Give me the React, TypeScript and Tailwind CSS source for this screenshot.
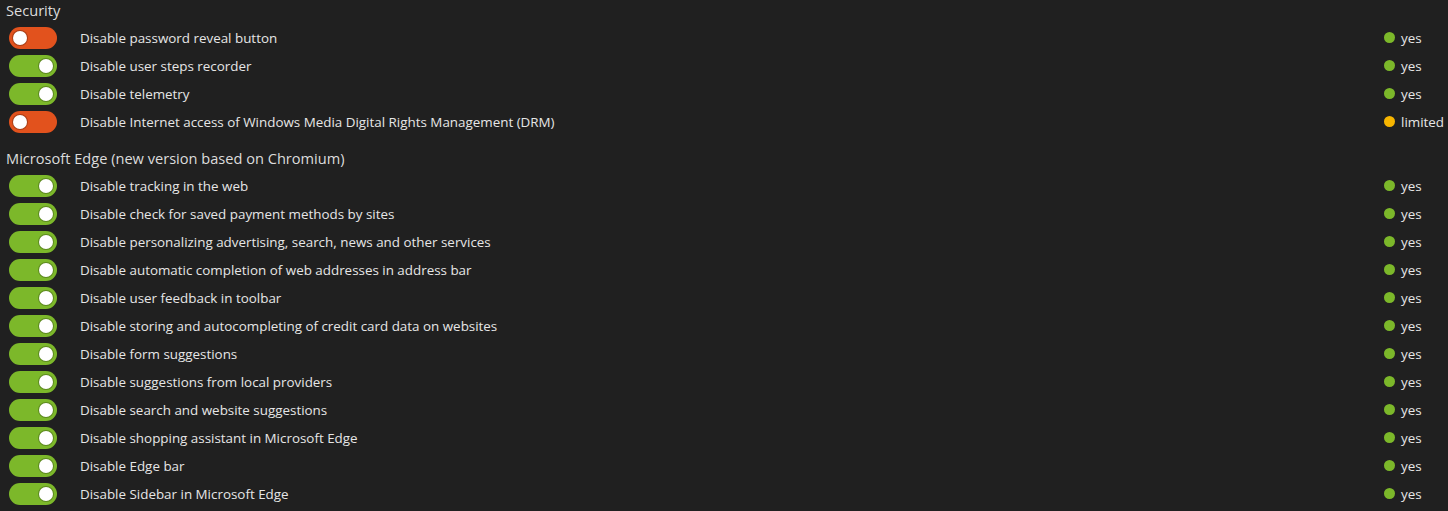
import React from "react";

type Item = { label: string; on: boolean; status: "yes" | "limited" };

const SECTIONS: { title: string; items: Item[] }[] = [
  {
    title: "Security",
    items: [
      { label: "Disable password reveal button", on: false, status: "yes" },
      { label: "Disable user steps recorder", on: true, status: "yes" },
      { label: "Disable telemetry", on: true, status: "yes" },
      {
        label: "Disable Internet access of Windows Media Digital Rights Management (DRM)",
        on: false,
        status: "limited",
      },
    ],
  },
  {
    title: "Microsoft Edge (new version based on Chromium)",
    items: [
      { label: "Disable tracking in the web", on: true, status: "yes" },
      { label: "Disable check for saved payment methods by sites", on: true, status: "yes" },
      { label: "Disable personalizing advertising, search, news and other services", on: true, status: "yes" },
      { label: "Disable automatic completion of web addresses in address bar", on: true, status: "yes" },
      { label: "Disable user feedback in toolbar", on: true, status: "yes" },
      { label: "Disable storing and autocompleting of credit card data on websites", on: true, status: "yes" },
      { label: "Disable form suggestions", on: true, status: "yes" },
      { label: "Disable suggestions from local providers", on: true, status: "yes" },
      { label: "Disable search and website suggestions", on: true, status: "yes" },
      { label: "Disable shopping assistant in Microsoft Edge", on: true, status: "yes" },
      { label: "Disable Edge bar", on: true, status: "yes" },
      { label: "Disable Sidebar in Microsoft Edge", on: true, status: "yes" },
    ],
  },
];

function Toggle({ on }: { on: boolean }) {
  return (
    <div
      className={`flex h-[22px] w-[48px] items-center rounded-full px-[4px] ${
        on ? "justify-end bg-[#7cb82a]" : "justify-start bg-[#e2521d]"
      }`}
    >
      <span className="size-[14px] rounded-full bg-white shadow-[0_0_0_1px_rgba(0,0,0,0.25)]" />
    </div>
  );
}

export default function App() {
  return (
    <div
      className="min-h-[511px] w-full bg-[#202020] text-[#e6e6e6]"
      style={{ fontFamily: '"Open Sans", "Noto Sans", sans-serif' }}
    >
      {SECTIONS.map((s, i) => (
        <section key={s.title} className={i > 0 ? "mt-[12px]" : ""}>
          <div className="flex h-[24px] items-start pl-[6px] text-[14.6px] leading-[20px] text-[#dcdcdc]">
            {s.title}
          </div>
          {s.items.map((it) => (
            <div key={it.label} className="flex h-[28px] items-center">
              <div className="w-[80px] pl-[9px]">
                <Toggle on={it.on} />
              </div>
              <div className="flex-1 text-[13.4px]">{it.label}</div>
              <div className="flex w-[64px] items-center gap-[6px] text-[13.4px]">
                <span
                  className={`size-[11px] rounded-full ${
                    it.status === "yes" ? "bg-[#7cb82a]" : "bg-[#f7b500]"
                  }`}
                />
                {it.status}
              </div>
            </div>
          ))}
        </section>
      ))}
    </div>
  );
}
